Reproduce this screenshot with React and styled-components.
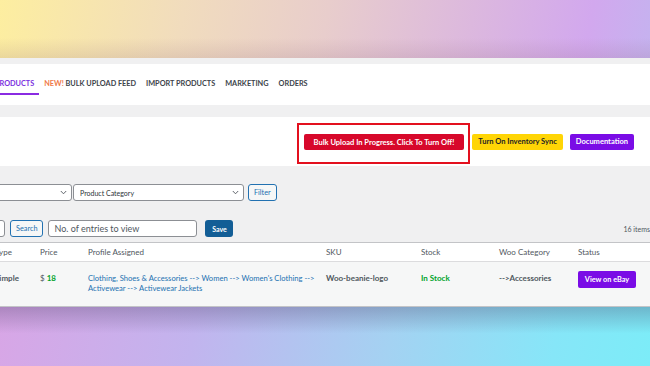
import React from 'react';
import styled, { createGlobalStyle } from 'styled-components';

const GlobalStyle = createGlobalStyle`
  html, body {
    margin: 0;
    padding: 0;
    overflow: hidden;
  }
  body {
    font-family: Lato, "Liberation Sans", sans-serif;
    color: #1d2327;
  }
`;

// Page frame
const Screen = styled.div`
  width: 650px;
  height: 366px;
  display: flex;
  flex-direction: column;
  overflow: hidden;
`;

const TopBand = styled.div`
  height: 58px;
  flex: none;
  background:
    linear-gradient(to bottom, rgba(255, 255, 255, 0) 65%, rgba(140, 100, 120, 0.16) 100%),
    linear-gradient(100deg, #fdeea0 0%, #f1dcbd 28%, #e8cdcc 50%, #dcb8de 72%, #d2a8ee 90%, #c5b2ef 100%);
`;

const BottomBand = styled.div`
  flex: 1;
  background:
    linear-gradient(to bottom, rgba(70, 60, 100, 0.3) 0%, rgba(255, 255, 255, 0) 45%),
    linear-gradient(100deg, #d8a6e6 0%, #c2b4ee 30%, #a4d2f2 60%, #86e6f8 85%, #7cecf8 100%);
`;

const Panel = styled.div`
  flex: none;
  background: #f0f0f1;
  padding-top: 6px;
  border-bottom: 1px solid #c3c4c7;
`;

// Tabs
const Nav = styled.nav`
  height: 41px;
  background: #fff;
  display: flex;
  align-items: center;
`;

const Tab = styled.div`
  font-size: 7.3px;
  font-weight: 700;
  line-height: 10px;
  padding: 5px 5px 4px;
  border-bottom: 2px solid ${(p) => (p.$active ? '#8a2be2' : 'transparent')};
  color: ${(p) => (p.$active ? '#7b2fe0' : '#3c434a')};
  white-space: nowrap;
  margin-left: ${(p) => (p.$cut ? '-10px' : '0')};
`;

const NewTag = styled.span`
  color: #f07a4a;
`;

// Action buttons
const Actions = styled.div`
  margin-top: 12px;
  height: 49px;
  background: #fff;
  display: flex;
  align-items: center;
  justify-content: flex-end;
  gap: 7px;
  padding-right: 16px;
`;

const Highlight = styled.div`
  border: 2px solid #e3101e;
  padding: 9px 4px 12px 5px;
  margin-top: 4px;
  margin-right: -5px;
  display: flex;
`;

const ActionButton = styled.button`
  height: 16px;
  border: none;
  border-radius: 2px;
  padding: 0 ${(p) => p.$pad || 7}px;
  font-family: Lato, "Liberation Sans", sans-serif;
  font-size: 7.5px;
  font-weight: 700;
  color: ${(p) => p.$fg};
  background: ${(p) => p.$bg};
  white-space: nowrap;
`;

// Filters
const Filters = styled.div`
  padding: 18px 0 5px;
  display: flex;
  flex-direction: column;
  gap: 19px;
`;

const Row = styled.div`
  display: flex;
  align-items: center;
  height: 17px;
`;

const Select = styled.div`
  box-sizing: border-box;
  width: ${(p) => p.$w}px;
  height: 17px;
  margin-left: ${(p) => p.$ml || 0}px;
  background: #fff;
  border: 1px solid #8c8f94;
  border-radius: 3px;
  display: flex;
  align-items: center;
  justify-content: space-between;
  padding: 0 4px 0 6px;
  font-size: 7px;
  color: #2c3338;
`;

const Chevron = () => (
  <svg width="7" height="5" viewBox="0 0 7 5">
    <polyline points="0.8,1 3.5,3.8 6.2,1" fill="none" stroke="#50575e" strokeWidth="0.9" />
  </svg>
);

const GhostButton = styled.div`
  box-sizing: border-box;
  height: 17px;
  margin-left: ${(p) => p.$ml || 0}px;
  padding: 0 5px;
  display: flex;
  align-items: center;
  background: #f6f7f7;
  border: 1px solid #2271b1;
  border-radius: 3px;
  color: #2271b1;
  font-size: 7.3px;
`;

const EntriesInput = styled.div`
  box-sizing: border-box;
  width: 149px;
  height: 17px;
  margin-left: 5px;
  background: #fff;
  border: 1px solid #8c8f94;
  border-radius: 3px;
  display: flex;
  align-items: center;
  padding-left: 5px;
  font-size: 9px;
  color: #50575e;
`;

const SaveButton = styled.div`
  box-sizing: border-box;
  height: 17px;
  width: 28px;
  margin-left: 8px;
  display: flex;
  align-items: center;
  justify-content: center;
  background: #135e96;
  border-radius: 3px;
  color: #fff;
  font-size: 7px;
  font-weight: 700;
`;

const ItemCount = styled.div`
  margin-left: auto;
  font-size: 7px;
  color: #50575e;
  white-space: nowrap;
`;

// Table
const Table = styled.div`
  display: grid;
  grid-template-columns: 45px 48px 238px 95px 78px 79px 1fr;
  margin-left: -5px;
  font-size: 8px;
`;

const HeadCell = styled.div`
  background: #fff;
  height: 20px;
  border-top: 1px solid #c3c4c7;
  border-bottom: 1px solid #dcdcde;
  box-sizing: border-box;
  display: flex;
  align-items: center;
  color: #50575e;
`;

const Cell = styled.div`
  background: #f6f7f7;
  height: 44px;
  padding-top: 11px;
  box-sizing: border-box;
  line-height: 10px;
  white-space: nowrap;
  color: ${(p) => p.$color || '#50575e'};
  font-weight: ${(p) => (p.$bold ? 700 : 400)};
`;

const Green = styled.span`
  color: #00a32a;
  font-weight: 700;
`;

const Link = styled.a`
  color: #2271b1;
  text-decoration: none;
  font-size: 7.6px;
`;

const EbayButton = styled.div`
  width: 58px;
  height: 17px;
  margin-top: -2px;
  background: #7a0ce6;
  border-radius: 2px;
  color: #fff;
  font-size: 7.3px;
  font-weight: 700;
  display: flex;
  align-items: center;
  justify-content: center;
`;

const headers = ['Type', 'Price', 'Profile Assigned', 'SKU', 'Stock', 'Woo Category', 'Status'];

export default function App() {
  return (
    <>
      <GlobalStyle />
      <Screen>
        <TopBand />
        <Panel>
          <Nav>
            <Tab $active $cut>PRODUCTS</Tab>
            <Tab><NewTag>NEW!</NewTag> BULK UPLOAD FEED</Tab>
            <Tab>IMPORT PRODUCTS</Tab>
            <Tab>MARKETING</Tab>
            <Tab>ORDERS</Tab>
          </Nav>

          <Actions>
            <Highlight>
              <ActionButton $pad={10} $bg="#d7082b" $fg="#fff">Bulk Upload In Progress. Click To Turn Off!</ActionButton>
            </Highlight>
            <ActionButton $pad={6} $bg="#ffd505" $fg="#1d2327">Turn On Inventory Sync</ActionButton>
            <ActionButton $pad={6} $bg="#7a0ce6" $fg="#fff">Documentation</ActionButton>
          </Actions>

          <Filters>
            <Row>
              <Select $w={82} $ml={-10}><span /><Chevron /></Select>
              <Select $w={171} $ml={1}>Product Category<Chevron /></Select>
              <GhostButton $ml={4}>Filter</GhostButton>
            </Row>
            <Row>
              <Select $w={20} $ml={-15}><span /><Chevron /></Select>
              <GhostButton $ml={5}>Search</GhostButton>
              <EntriesInput>No. of entries to view</EntriesInput>
              <SaveButton>Save</SaveButton>
              <ItemCount>16 items</ItemCount>
            </Row>
          </Filters>

          <Table>
            {headers.map((h) => (
              <HeadCell key={h}>{h}</HeadCell>
            ))}
            <Cell $bold>Simple</Cell>
            <Cell>$ <Green>18</Green></Cell>
            <Cell>
              <Link href="#">Clothing, Shoes &amp; Accessories --&gt; Women --&gt; Women's Clothing --&gt;<br />Activewear --&gt; Activewear Jackets</Link>
            </Cell>
            <Cell $bold>Woo-beanie-logo</Cell>
            <Cell $bold $color="#00a32a">In Stock</Cell>
            <Cell $bold>--&gt;Accessories</Cell>
            <Cell><EbayButton>View on eBay</EbayButton></Cell>
          </Table>
        </Panel>
        <BottomBand />
      </Screen>
    </>
  );
}
